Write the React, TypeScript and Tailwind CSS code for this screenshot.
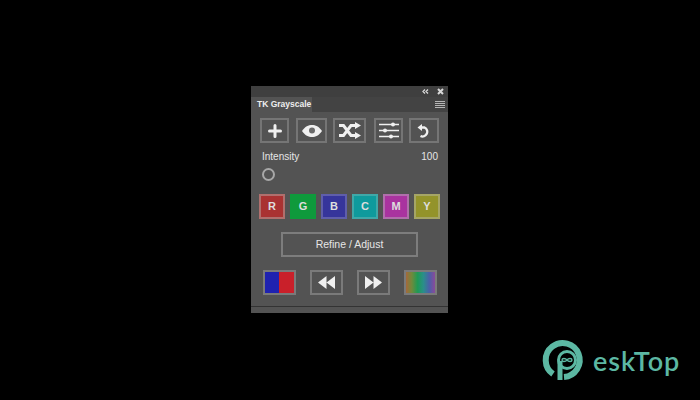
import React from 'react';

const colorButtons = [
  { label: 'R', cls: 'bg-[#a93232] border-[#b06f6d]' },
  { label: 'G', cls: 'bg-[#0f9a3c] border-[#0f9a3c]' },
  { label: 'B', cls: 'bg-[#36359b] border-[#5f5eab]' },
  { label: 'C', cls: 'bg-[#0f9a9c] border-[#3fa8a8]' },
  { label: 'M', cls: 'bg-[#a9339f] border-[#b06fab]' },
  { label: 'Y', cls: 'bg-[#93932a] border-[#a5a566]' },
];

const iconBtn = 'h-[25px] flex items-center justify-center border-2 border-[#757575] text-[#f0f0f0]';
const bottomBtn = 'h-[25px] w-[33px] flex items-center justify-center border-2 border-[#7a7a7a]';

const App: React.FC = () => {
  return (
    <div className="relative w-[700px] h-[400px] bg-black overflow-hidden font-['Liberation_Sans',sans-serif] pl-[251px] pt-[86px]">
      <div className="w-[197px] h-[227px] bg-[#535353] flex flex-col">
        {/* title strip */}
        <div className="h-[11px] bg-[#3f3f3f] flex items-center justify-end gap-[8px] pr-[4px] text-[#d8d8d8]">
          <svg width="7" height="5" viewBox="0 0 7 5" fill="none" stroke="currentColor" strokeWidth="1.3">
            <path d="M3 0.500 1 2.500 3 4.500M6 0.500 4 2.500 6 4.500" />
          </svg>
          <svg width="7" height="7" viewBox="0 0 7 7" fill="none" stroke="currentColor" strokeWidth="2">
            <path d="M1 1 6 6M6 1 1 6" />
          </svg>
        </div>

        {/* tab row */}
        <div className="h-[15px] bg-[#434343] flex items-center justify-between pr-[3px]">
          <div className="h-full w-[61px] bg-[#535353] pl-[6px] flex items-center whitespace-nowrap text-[8.5px] font-bold text-[#eeeeee]">TK Grayscale</div>
          <div className="w-[10px] flex flex-col gap-[1px]">
            <div className="h-[1px] bg-[#b5b5b5]" />
            <div className="h-[1px] bg-[#b5b5b5]" />
            <div className="h-[1px] bg-[#b5b5b5]" />
            <div className="h-[1px] bg-[#b5b5b5]" />
          </div>
        </div>

        {/* tool row */}
        <div className="flex pl-[9px] mt-[6px]">
          <div className={`${iconBtn} w-[29px]`}>
            <svg width="14" height="14" viewBox="0 0 14 14" fill="none" stroke="currentColor" strokeWidth="3" strokeLinecap="round">
              <path d="M7 1.500V12.500M1.500 7H12.500" />
            </svg>
          </div>
          <div className={`${iconBtn} w-[31px] ml-[7px]`}>
            <svg width="20" height="12" viewBox="0 0 20 12">
              <path fill="currentColor" d="M0 6C3 1.500 6.500 0 10 0s7 1.500 10 6c-3 4.500-6.500 6-10 6S3 10.500 0 6Z" />
              <circle cx="10" cy="5.500" r="3" fill="#6a6a6a" />
            </svg>
          </div>
          <div className={`${iconBtn} w-[33px] ml-[6px]`}>
            <svg width="23" height="17" viewBox="0 0 23 17" fill="none">
              <path d="M1 3.500H5.500L13 13.500H17M1 13.500H5.500L13 3.500H17" stroke="currentColor" strokeWidth="3" />
              <path d="M17 0 23 3.500 17 7ZM17 10 23 13.500 17 17Z" fill="currentColor" />
            </svg>
          </div>
          <div className={`${iconBtn} w-[29px] ml-[8px]`}>
            <svg width="20" height="17" viewBox="0 0 20 17" fill="none" stroke="currentColor">
              <path d="M0 2.500H20M0 8.500H20M0 14.500H20" strokeWidth="1.400" />
              <circle cx="14" cy="2.500" r="2" fill="currentColor" stroke="none" />
              <circle cx="6" cy="8.500" r="2" fill="currentColor" stroke="none" />
              <circle cx="12" cy="14.500" r="2" fill="currentColor" stroke="none" />
            </svg>
          </div>
          <div className={`${iconBtn} w-[30px] ml-[6px]`}>
            <svg width="14" height="14" viewBox="0 0 14 14" fill="none">
              <path d="M4 3.500H7.500A4.300 4.300 0 1 1 3.500 12" stroke="currentColor" strokeWidth="2.400" />
              <path d="M5 0V7L0.500 3.500Z" fill="currentColor" />
            </svg>
          </div>
        </div>

        {/* intensity */}
        <div className="flex justify-between pl-[11px] pr-[10px] mt-[8px] text-[10px] leading-[12px] text-[#e6e6e6]">
          <span>Intensity</span>
          <span>100</span>
        </div>
        <div className="mt-[5px] h-[14px] ml-[11px]">
          <div className="w-[13px] h-[13px] rounded-full border-2 border-[#a8a8a8]" />
        </div>

        {/* colour buttons */}
        <div className="flex gap-[5px] pl-[8px] mt-[12px]">
          {colorButtons.map((b) => (
            <div key={b.label} className={`w-[26px] h-[25px] border-2 flex items-center justify-center text-[11px] font-bold text-[#dedede] ${b.cls}`}>
              {b.label}
            </div>
          ))}
        </div>

        <div className="ml-[30px] mt-[13px] w-[137px] h-[25px] border-2 border-[#7d7d7d] flex items-center justify-center text-[10.5px] text-[#e6e6e6]">
          Refine / Adjust
        </div>

        {/* bottom buttons */}
        <div className="flex pl-[12px] mt-[13px] gap-[14px]">
          <div className={`${bottomBtn} bg-[linear-gradient(90deg,#1f22b0_50%,#c9202a_50%)]`} />
          <div className={bottomBtn}>
            <svg width="17" height="13" viewBox="0 0 17 13" fill="#f0f0f0"><path d="M8.500 0v13L0 6.500ZM17 0v13L8.500 6.500Z" /></svg>
          </div>
          <div className={bottomBtn}>
            <svg width="17" height="13" viewBox="0 0 17 13" fill="#f0f0f0"><path d="M0 0v13l8.500-6.500ZM8.500 0v13L17 6.500Z" /></svg>
          </div>
          <div className={`${bottomBtn} bg-[linear-gradient(90deg,#a5683c,#6f8a3c,#1f9a55,#2a8f8a,#4a60a8,#8a4a9a)]`} />
        </div>

        <div className="mt-auto mb-[6px] h-[1px] bg-[#333333]" />
      </div>

      {/* watermark logo */}
      <div className="absolute left-[542px] top-[337px] flex items-center text-[#5cb8a3]">
        <svg width="46" height="46" viewBox="0 0 46 46" fill="none" stroke="currentColor">
          <path d="M11 37A17 17 0 1 1 22 40" strokeWidth="6" />
          <path d="M18 24V43" strokeWidth="5" />
          <circle cx="25" cy="23" r="8.500" strokeWidth="3" />
          <path d="M25 23c-1.500-2-5-2-5 0s3.500 2 5 0 5-2 5 0-3.500 2-5 0Z" strokeWidth="1.400" />
        </svg>
        <span className="ml-[5px] mt-[1px] text-[27px] leading-[30px] tracking-[1px] font-['Lato',sans-serif] font-semibold">eskTop</span>
      </div>
    </div>
  );
};

export default App;
